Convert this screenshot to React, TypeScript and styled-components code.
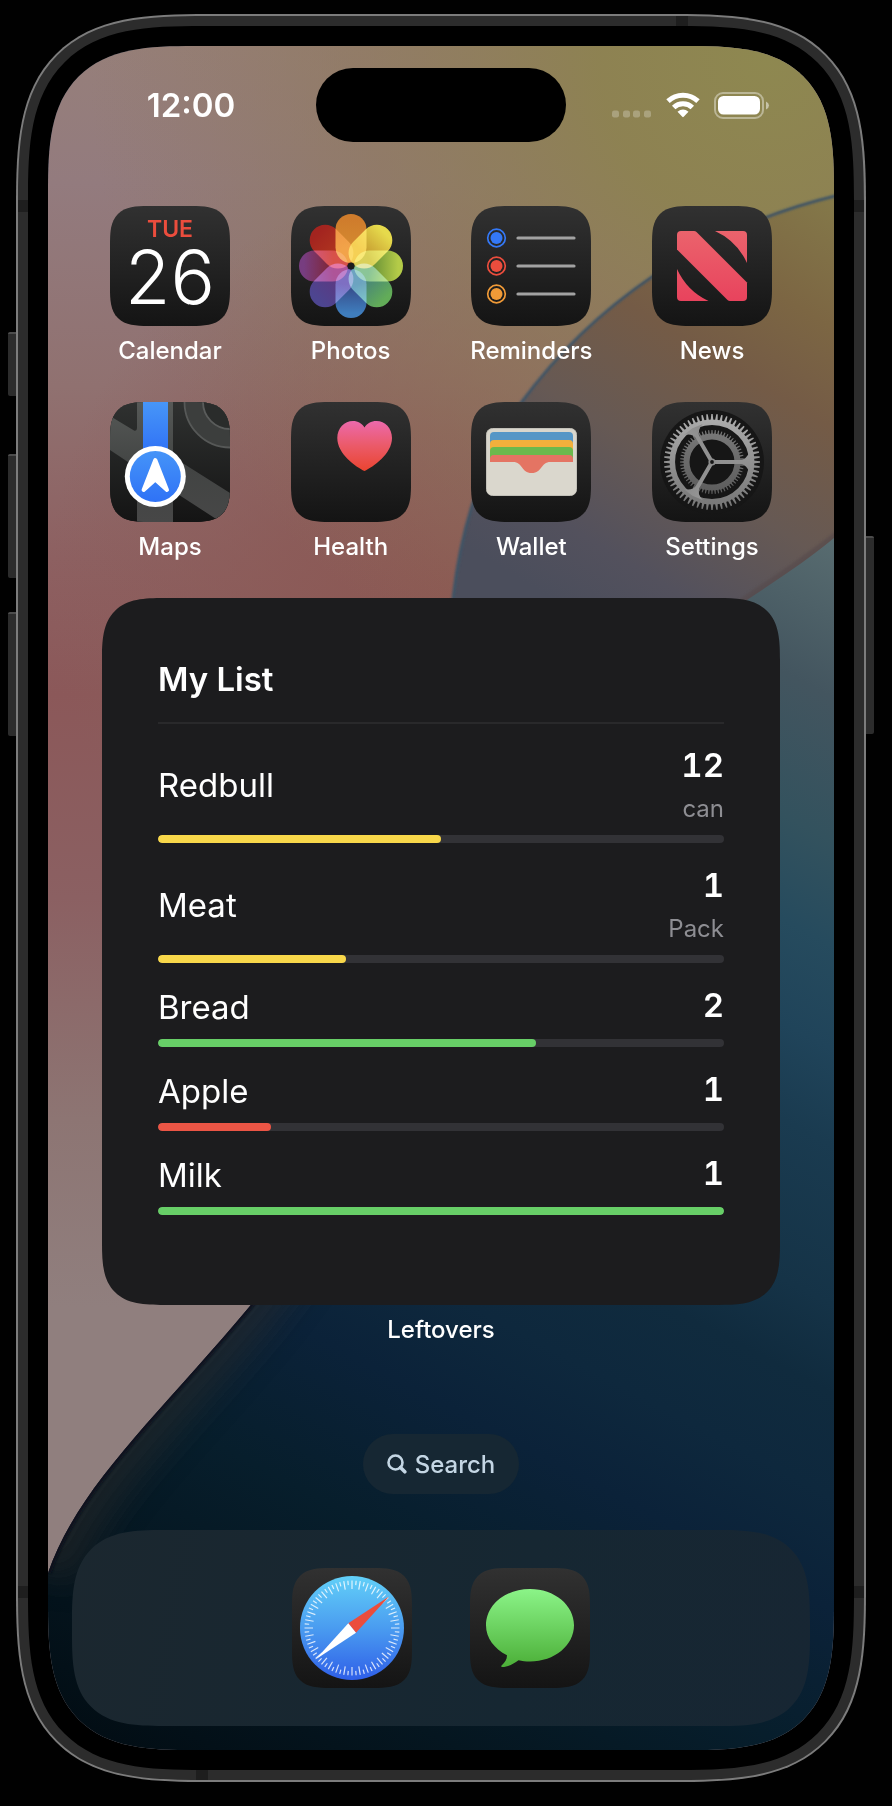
import React from "react";
import styled, { createGlobalStyle, css } from "styled-components";

const GlobalStyle = createGlobalStyle`
  *, *::before, *::after { box-sizing: border-box; }
  body {
    margin: 0;
    background: #010101;
    font-family: Inter, "Liberation Sans", sans-serif;
    color: #fff;
  }
  button { font: inherit; color: inherit; border: 0; padding: 0; background: none; cursor: pointer; }
`;

/* Continuous-curvature corner, with a plain round corner as the fallback. */
const squircle = (radius: number) => css`
  border-radius: ${radius}px;
  @supports (corner-shape: superellipse(1.57)) {
    border-radius: ${Math.round(radius * 1.4)}px;
    corner-shape: superellipse(1.57);
  }
`;

/* ---------- Device ---------- */

const Page = styled.main`
  padding: 14px 26px 24px 16px;
`;

const Frame = styled.div`
  position: relative;
  max-width: 1000px;
  margin: 0 auto;
  padding: 2px;
  background: #7c7c7c;
  ${squircle(137)}
`;

const Band = styled.div`
  padding: 10px;
  background: #2c2c2c;
  position: relative;
  overflow: hidden;
  ${squircle(135)}
`;

const Bezel = styled.div`
  position: relative;
  padding: 20px;
  background: #000;
  ${squircle(125)}
`;

const Screen = styled.div`
  position: relative;
  isolation: isolate;
  overflow: hidden;
  display: flex;
  flex-direction: column;
  padding-bottom: 24px;
  background: #0b2138;
  ${squircle(105)}
`;

const SideButton = styled.span<{ $side: "left" | "right"; $top: number; $height: number }>`
  position: absolute;
  ${(p) => p.$side}: -8px;
  top: ${(p) => p.$top}px;
  width: 8px;
  height: ${(p) => p.$height}px;
  background: #2c2c2c;
  border-top: 2px solid #4c4c4c;
  border-radius: ${(p) => (p.$side === "left" ? "2px 0 0 2px" : "0 2px 2px 0")};
`;

const Antenna = styled.span<{ $at: "tl" | "tr" | "bl" | "br" | "top" | "bottom" }>`
  position: absolute;
  background: #1e1e1e;
  ${(p) =>
    ({
      tl: "left: 0; top: 184px; width: 10px; height: 12px;",
      tr: "right: 0; top: 184px; width: 10px; height: 12px;",
      bl: "left: 0; bottom: 182px; width: 10px; height: 12px;",
      br: "right: 0; bottom: 182px; width: 10px; height: 12px;",
      top: "right: 176px; top: 0; width: 12px; height: 10px;",
      bottom: "left: 178px; bottom: 0; width: 12px; height: 10px;",
    })[p.$at]}
`;

const WallpaperSvg = styled.svg`
  position: absolute;
  inset: 0;
  width: 100%;
  height: 100%;
  z-index: -1;
`;

const TEAL =
  "M699 554 C735 530 765 510 786 492 L786 1704 L0 1704 L0 1527 C30 1440 110 1370 202 1260 L300 1130 Z";

function Wallpaper() {
  return (
    <WallpaperSvg viewBox="0 0 786 1704" preserveAspectRatio="none" aria-hidden="true">
      <defs>
        <linearGradient id="wp-base" x1="0" y1="0" x2="0" y2="1">
          <stop offset="0" stopColor="#967f7a" />
          <stop offset=".08" stopColor="#937b7e" />
          <stop offset=".2" stopColor="#907170" />
          <stop offset=".3" stopColor="#8d6061" />
          <stop offset=".38" stopColor="#8b5859" />
          <stop offset=".5" stopColor="#8b6062" />
          <stop offset=".63" stopColor="#8d7573" />
          <stop offset=".74" stopColor="#907f7e" />
          <stop offset="1" stopColor="#907f7e" />
        </linearGradient>
        <radialGradient id="wp-olive" gradientUnits="userSpaceOnUse" cx="720" cy="10" r="680">
          <stop offset="0" stopColor="#8e8850" />
          <stop offset=".25" stopColor="#8d8250" stopOpacity=".95" />
          <stop offset=".6" stopColor="#8f7a5a" stopOpacity=".6" />
          <stop offset="1" stopColor="#90785f" stopOpacity="0" />
        </radialGradient>
        <radialGradient id="wp-red" gradientUnits="userSpaceOnUse" cx="400" cy="540" r="400">
          <stop offset="0" stopColor="#8b5752" />
          <stop offset=".4" stopColor="#8b5a56" stopOpacity=".75" />
          <stop offset="1" stopColor="#8b5f5a" stopOpacity="0" />
        </radialGradient>
        <linearGradient id="wp-arc" gradientUnits="userSpaceOnUse" x1="760" y1="120" x2="500" y2="550">
          <stop offset="0" stopColor="#857b4a" />
          <stop offset=".25" stopColor="#7c6643" />
          <stop offset=".42" stopColor="#745b46" />
          <stop offset=".65" stopColor="#665954" />
          <stop offset=".86" stopColor="#53515d" />
          <stop offset="1" stopColor="#4b4e5c" />
        </linearGradient>
        <linearGradient id="wp-teal" gradientUnits="userSpaceOnUse" x1="786" y1="492" x2="124" y2="1742">
          <stop offset="0" stopColor="#586c70" />
          <stop offset=".1" stopColor="#43555f" />
          <stop offset=".19" stopColor="#33525e" />
          <stop offset=".255" stopColor="#264b5e" />
          <stop offset=".32" stopColor="#20445a" />
          <stop offset=".38" stopColor="#1a3b50" />
          <stop offset=".48" stopColor="#153347" />
          <stop offset=".535" stopColor="#102b3e" />
          <stop offset=".6" stopColor="#0e283d" />
          <stop offset=".67" stopColor="#0b2239" />
          <stop offset=".77" stopColor="#071e2c" />
          <stop offset=".88" stopColor="#051620" />
          <stop offset="1" stopColor="#020d14" />
        </linearGradient>
        <clipPath id="wp-teal-clip">
          <path d={TEAL} />
        </clipPath>
        <filter id="wp-soft" x="-20%" y="-20%" width="140%" height="140%">
          <feGaussianBlur stdDeviation="16" />
        </filter>
        <filter id="wp-edge" x="-5%" y="-5%" width="110%" height="110%">
          <feGaussianBlur stdDeviation="1" />
        </filter>
      </defs>
      <rect width="786" height="1704" fill="url(#wp-base)" />
      <rect width="786" height="1000" fill="url(#wp-red)" />
      <rect width="786" height="800" fill="url(#wp-olive)" />
      <path d="M786 150 C650 180 540 265 473 357 C430 420 412 490 405 552 L405 700 L786 700 Z" fill="url(#wp-arc)" />
      <path
        d="M800 147 C650 180 540 265 473 357 C430 420 412 490 405 552 L403 600"
        fill="none"
        stroke="#3f5466"
        strokeWidth="3"
        filter="url(#wp-edge)"
      />
      <path d="M690 560 C735 530 765 510 800 482" fill="none" stroke="#554a4c" strokeWidth="10" opacity=".6" filter="url(#wp-edge)" />
      <path d={TEAL} fill="url(#wp-teal)" />
      <g clipPath="url(#wp-teal-clip)">
        <path
          d="M0 1527 C30 1440 110 1370 202 1260 L300 1130"
          fill="none"
          stroke="#2c2c2b"
          strokeWidth="56"
          opacity=".55"
          filter="url(#wp-soft)"
        />
        <path
          d="M0 1527 C30 1440 110 1370 202 1260 L300 1130"
          fill="none"
          stroke="#08111b"
          strokeWidth="6"
          opacity=".85"
          filter="url(#wp-edge)"
        />
      </g>
    </WallpaperSvg>
  );
}

/* ---------- Status bar ---------- */

const StatusBar = styled.header`
  display: grid;
  grid-template-columns: 1fr 250px 1fr;
  align-items: center;
  height: 74px;
  margin: 22px 0 64px;
`;

const Clock = styled.time`
  justify-self: center;
  padding-left: 18px;
  font-size: 33px;
  font-weight: 600;
  line-height: 40px;
`;

const Island = styled.div`
  height: 74px;
  border-radius: 37px;
  background: #000;
`;

const StatusIcons = styled.div`
  justify-self: end;
  display: flex;
  align-items: center;
  gap: 14px;
  padding-right: 64px;
  svg { display: block; }
`;

/* ---------- Apps ---------- */

const AppGrid = styled.nav`
  display: grid;
  grid-template-columns: repeat(4, 120px);
  justify-content: space-between;
  row-gap: 37px;
  padding: 0 62px;
`;

const AppButton = styled.button`
  display: flex;
  flex-direction: column;
  align-items: center;
  gap: 10px;
`;

const Label = styled.span`
  font-size: 24px;
  font-weight: 500;
  line-height: 29px;
  white-space: nowrap;
`;

const Tile = styled.span`
  display: block;
  width: 120px;
  height: 120px;
  overflow: hidden;
  background: linear-gradient(#313131, #141414);
  ${squircle(27)}
  > svg { display: block; width: 120px; height: 120px; }
`;

const CalendarFace = styled.span`
  display: flex;
  flex-direction: column;
  align-items: center;
  padding-top: 11px;
`;

const Weekday = styled.span`
  font-size: 23px;
  font-weight: 600;
  line-height: 24px;
  color: #eb4d3d;
`;

const DayNumber = styled.span`
  font-size: 74px;
  font-weight: 300;
  line-height: 72px;
`;

function CalendarIcon() {
  return (
    <CalendarFace>
      <Weekday>TUE</Weekday>
      <DayNumber>26</DayNumber>
    </CalendarFace>
  );
}

const petals: [string, string][] = [
  ["#cf7c2c", "#d48a30"],
  ["#e6da4c", "#c4982e"],
  ["#b4cb48", "#5f8a34"],
  ["#62ac58", "#45807c"],
  ["#3f7dbd", "#354684"],
  ["#4d4590", "#5c3880"],
  ["#773d80", "#802430"],
  ["#a3241f", "#b0361f"],
];

function PhotosIcon() {
  return (
    <svg viewBox="0 0 120 120">
      <defs>
        {petals.map(([a, b], i) => (
          <linearGradient key={i} id={`petal-${i}`} x1="0" y1="0" x2="0" y2="1">
            <stop offset=".1" stopColor={a} />
            <stop offset=".7" stopColor={b} />
          </linearGradient>
        ))}
      </defs>
      <g style={{ isolation: "isolate" }}>
        {petals.map((_, i) => (
          <rect
            key={i}
            x="44.5"
            y="8"
            width="31"
            height="49"
            rx="15.5"
            fill={`url(#petal-${i})`}
            transform={`rotate(${i * 45} 60 60)`}
            style={{ mixBlendMode: "screen" }}
          />
        ))}
      </g>
      <circle cx="60" cy="60" r="3.5" fill="#1c1c1c" />
    </svg>
  );
}

function RemindersIcon() {
  return (
    <svg viewBox="0 0 120 120">
      {["#3478f6", "#eb4d3d", "#f09a37"].map((c, i) => (
        <g key={c} transform={`translate(0 ${32 + i * 28})`}>
          <circle cx="25.500" cy="0" r="8.8" fill="none" stroke={c} strokeWidth="1.7" />
          <circle cx="25.500" cy="0" r="6" fill={c} />
          <path d="M47 0H103" stroke="#a2a2a2" strokeWidth="3.200" strokeLinecap="round" />
        </g>
      ))}
    </svg>
  );
}

function NewsIcon() {
  return (
    <svg viewBox="0 0 120 120">
      <defs>
        <linearGradient id="news" gradientUnits="userSpaceOnUse" x1="0" y1="25" x2="0" y2="95">
          <stop offset="0" stopColor="#eb636c" />
          <stop offset="1" stopColor="#e8435d" />
        </linearGradient>
      </defs>
      <g fill="url(#news)">
        <path d="M29 25H42Q43.500 25 44.500 26L95 76.500V91Q95 95 91 95H78Q76.500 95 75.500 94L25 43.500V29Q25 25 29 25Z" />
        <path d="M63 25H91Q95 25 95 29V57Q85 35 63 25Z" />
        <path d="M25 63Q35 85 56.500 95H29Q25 95 25 91Z" />
      </g>
    </svg>
  );
}

function MapsIcon() {
  return (
    <svg viewBox="0 0 120 120">
      <defs>
        <linearGradient id="map-ground" x1="0" y1="0" x2="0" y2="1">
          <stop offset="0" stopColor="#2f3130" />
          <stop offset="1" stopColor="#141414" />
        </linearGradient>
        <linearGradient id="map-road" gradientUnits="userSpaceOnUse" x1="0" y1="0" x2="0" y2="120">
          <stop offset="0" stopColor="#565957" />
          <stop offset=".55" stopColor="#424443" />
          <stop offset="1" stopColor="#474747" />
        </linearGradient>
        <linearGradient id="map-blue" gradientUnits="userSpaceOnUse" x1="0" y1="0" x2="0" y2="60">
          <stop offset="0" stopColor="#4796f8" />
          <stop offset=".7" stopColor="#3478f6" />
          <stop offset="1" stopColor="#2c6bf0" />
        </linearGradient>
        <linearGradient id="map-pin" x1="0" y1="0" x2="0" y2="1">
          <stop offset="0" stopColor="#4594f8" />
          <stop offset="1" stopColor="#2f72f6" />
        </linearGradient>
      </defs>
      <rect width="120" height="120" fill="url(#map-ground)" />
      <circle cx="120" cy="0" r="45.500" fill="#3c3e3d" stroke="#565857" strokeWidth="1.800" />
      <circle cx="120" cy="0" r="27" fill="#2a2c2b" stroke="#5a5c5b" strokeWidth="1.800" />
      <path d="M0 14 24 28.500Q27 29.500 27 26V0H63V55L120 91V126L63 89V120H27V66L0 48Z" fill="url(#map-road)" />
      <rect x="33" y="0" width="25" height="60" fill="url(#map-blue)" />
      <circle cx="45.300" cy="74.500" r="30.500" fill="#fff" />
      <circle cx="45.300" cy="74.500" r="25.500" fill="url(#map-pin)" />
      <path d="M45.300 58 57 88 45.300 77.500 33.600 88Z" fill="#fff" stroke="#fff" strokeWidth="4" strokeLinejoin="round" />
    </svg>
  );
}

function HealthIcon() {
  return (
    <svg viewBox="0 0 120 120">
      <defs>
        <linearGradient id="heart" x1="0" y1="0" x2="0" y2="1">
          <stop offset="0" stopColor="#ec69ac" />
          <stop offset=".5" stopColor="#eb5a68" />
          <stop offset="1" stopColor="#ea4430" />
        </linearGradient>
      </defs>
      <path
        d="M73.500 69C65 65 46.300 52 46.300 36C46.300 26 53.500 19 62 19C67 19 71 21.500 73.500 25.500C76 21.500 80 19 85.500 19C94 19 101 26 101 36C101 52 82 65 73.500 69Z"
        fill="url(#heart)"
      />
    </svg>
  );
}

function WalletIcon() {
  return (
    <svg viewBox="0 0 120 120">
      <g transform="translate(1 0)">
        <rect x="14.500" y="26.500" width="90" height="67" rx="6" fill="#d9d6cc" stroke="#c2c0b8" strokeWidth="1" />
        <path d="M18 62V34a4 4 0 0 1 4-4H97a4 4 0 0 1 4 4V62Z" fill="#5596c6" />
        <path d="M18 62V42a4 4 0 0 1 4-4H97a4 4 0 0 1 4 4V62Z" fill="#f2b03c" />
        <path d="M18 62V49a4 4 0 0 1 4-4H97a4 4 0 0 1 4 4V62Z" fill="#6bb94d" />
        <path d="M18 76V57a4 4 0 0 1 4-4H97a4 4 0 0 1 4 4V76Z" fill="#e47463" />
        <path d="M15 60H41C51 60 49 71 59.700 71C70.500 71 68.500 60 78.500 60H104V88a5 5 0 0 1-5 5H20a5 5 0 0 1-5-5Z" fill="#dad7cd" />
      </g>
    </svg>
  );
}

const teeth = (count: number, inner: number, outer: number, base: number, tip: number) =>
  Array.from({ length: count }, (_, i) => {
    const a = (i * 2 * Math.PI) / count;
    const point = (r: number, w: number) => {
      const x = 60 + r * Math.cos(a) - w * Math.sin(a);
      const y = 60 + r * Math.sin(a) + w * Math.cos(a);
      return `${x.toFixed(2)} ${y.toFixed(2)}`;
    };
    return `M${point(inner, -base)}L${point(outer, -tip)}L${point(outer, tip)}L${point(inner, base)}Z`;
  }).join("");

function SettingsIcon() {
  return (
    <svg viewBox="0 0 120 120">
      <defs>
        <linearGradient id="gear" gradientUnits="userSpaceOnUse" x1="0" y1="12" x2="0" y2="108">
          <stop offset="0" stopColor="#adadad" />
          <stop offset="1" stopColor="#757575" />
        </linearGradient>
        <linearGradient id="gear-inner" gradientUnits="userSpaceOnUse" x1="0" y1="28" x2="0" y2="92">
          <stop offset="0" stopColor="#787878" />
          <stop offset="1" stopColor="#5c5c5c" />
        </linearGradient>
      </defs>
      <circle cx="60" cy="60" r="52" fill="#161616" />
      <path d={teeth(60, 27, 32, 0.9, 0.5)} fill="url(#gear-inner)" />
      <circle cx="60" cy="60" r="25.500" fill="none" stroke="url(#gear-inner)" strokeWidth="6" />
      <path d={teeth(60, 41, 48, 1.4, 0.7)} fill="url(#gear)" />
      <circle cx="60" cy="60" r="39.700" fill="none" stroke="url(#gear)" strokeWidth="5.500" />
      <g fill="url(#gear)">
        {[0, 120, 240].map((r) => (
          <path key={r} d="M60 58H88Q95 57.500 97.500 49L99 60L97.500 71Q95 62.500 88 62H60Z" transform={`rotate(${r} 60 60)`} />
        ))}
      </g>
      <circle cx="60" cy="60" r="3.600" fill="#8d8d8d" />
      <circle cx="60" cy="60" r="1.900" fill="#161616" />
    </svg>
  );
}

function SafariIcon() {
  return (
    <svg viewBox="0 0 120 120">
      <defs>
        <linearGradient id="safari" x1="0" y1="0" x2="0" y2="1">
          <stop offset="0" stopColor="#62d0f8" />
          <stop offset=".5" stopColor="#4a9cf0" />
          <stop offset="1" stopColor="#2f5fe8" />
        </linearGradient>
      </defs>
      <circle cx="60" cy="60" r="52" fill="url(#safari)" />
      <g stroke="#fff" strokeOpacity=".8" strokeWidth="1.200">
        {Array.from({ length: 72 }, (_, i) => (
          <path key={i} d={i % 2 ? "M60 12.500V17" : "M60 12.500V21"} transform={`rotate(${i * 5} 60 60)`} />
        ))}
      </g>
      <path d="M97 28.500 64 64.700 56.300 55.300Z" fill="#eb4d3d" />
      <path d="M23.500 91.500 56.300 55.300 64 64.700Z" fill="#fff" />
    </svg>
  );
}

function MessagesIcon() {
  return (
    <svg viewBox="0 0 120 120">
      <defs>
        <linearGradient id="messages" x1="0" y1="0" x2="0" y2="1">
          <stop offset="0" stopColor="#8bf488" />
          <stop offset="1" stopColor="#4caf38" />
        </linearGradient>
      </defs>
      <path
        d="M60 21C84.500 21 104 37 104 57.300C104 77.500 84.500 93.500 60 93.500C56 93.500 52 93 48.500 92.200C43.500 96 38 98.700 32 99C31 99 31 98 31.800 97.300C35 94.500 37 91.500 37 87.300C24.500 81 16 70 16 57.300C16 37 35.500 21 60 21Z"
        fill="url(#messages)"
      />
    </svg>
  );
}

const apps: { name: string; icon: React.ReactNode }[] = [
  { name: "Calendar", icon: <CalendarIcon /> },
  { name: "Photos", icon: <PhotosIcon /> },
  { name: "Reminders", icon: <RemindersIcon /> },
  { name: "News", icon: <NewsIcon /> },
  { name: "Maps", icon: <MapsIcon /> },
  { name: "Health", icon: <HealthIcon /> },
  { name: "Wallet", icon: <WalletIcon /> },
  { name: "Settings", icon: <SettingsIcon /> },
];

/* ---------- Widget ---------- */

const WidgetArea = styled.section`
  display: flex;
  flex-direction: column;
  gap: 10px;
  margin: 37px 54px 90px;
  text-align: center;
`;

const Widget = styled.div`
  padding: 56px 56px 90px;
  background: #1c1c1e;
  text-align: left;
  ${squircle(44)}
`;

const WidgetTitle = styled.h2`
  margin: 0 0 23px;
  padding-bottom: 18px;
  border-bottom: 2px solid #29292b;
  font-size: 33px;
  font-weight: 600;
  line-height: 50px;
`;

const ItemList = styled.ul`
  display: flex;
  flex-direction: column;
  gap: 24px;
  margin: 0;
  padding: 0;
  list-style: none;
`;

const Item = styled.li`
  display: flex;
  flex-direction: column;
  gap: 12px;
`;

const ItemRow = styled.div`
  display: flex;
  align-items: center;
  justify-content: space-between;
`;

const ItemName = styled.span`
  font-size: 33px;
  line-height: 40px;
`;

const Amount = styled.span`
  align-self: flex-start;
  display: flex;
  flex-direction: column;
  align-items: flex-end;
  gap: 12px;
`;

const Count = styled.span`
  font-size: 33px;
  font-weight: 600;
  line-height: 36px;
  font-variant-numeric: tabular-nums;
`;

const Unit = styled.span`
  font-size: 24px;
  line-height: 28px;
  color: #8e8e93;
`;

const Track = styled.div`
  height: 8px;
  overflow: hidden;
  border-radius: 4px;
  background: #323236;
`;

const Fill = styled.div<{ $color: string }>`
  height: 100%;
  border-radius: 4px;
  background: ${(p) => p.$color};
`;

const YELLOW = "#f8d74a";
const GREEN = "#67ce67";
const RED = "#eb5545";

const items = [
  { name: "Redbull", count: 12, unit: "can", percent: 50, color: YELLOW },
  { name: "Meat", count: 1, unit: "Pack", percent: 33.3, color: YELLOW },
  { name: "Bread", count: 2, percent: 66.7, color: GREEN },
  { name: "Apple", count: 1, percent: 20, color: RED },
  { name: "Milk", count: 1, percent: 100, color: GREEN },
];

/* ---------- Search and dock ---------- */

const SearchButton = styled.button`
  align-self: center;
  display: flex;
  align-items: center;
  gap: 8px;
  height: 60px;
  padding: 0 24px;
  border-radius: 30px;
  background: #162733;
  color: #c4d6e4;
  font-size: 24px;
  font-weight: 500;
  line-height: 29px;
`;

const Dock = styled.footer`
  display: flex;
  justify-content: center;
  gap: 58px;
  margin: 36px 24px 0;
  padding: 38px;
  background: linear-gradient(100deg, #1b272f, #162732 60%, #172633);
  ${squircle(66)}
`;

export default function App() {
  return (
    <Page>
      <GlobalStyle />
      <Frame>
        <SideButton $side="left" $top={318} $height={64} />
        <SideButton $side="left" $top={440} $height={124} />
        <SideButton $side="left" $top={598} $height={124} />
        <SideButton $side="right" $top={522} $height={198} />
        <Band>
          <Antenna $at="tl" />
          <Antenna $at="tr" />
          <Antenna $at="bl" />
          <Antenna $at="br" />
          <Antenna $at="top" />
          <Antenna $at="bottom" />
          <Bezel>
            <Screen>
              <Wallpaper />
              <StatusBar>
                <Clock>12:00</Clock>
                <Island />
                <StatusIcons>
                  <svg width="40" height="27" viewBox="0 0 40 27" fill="#fff" fillOpacity=".25" aria-label="No signal">
                    {[0, 11, 21, 32].map((x) => (
                      <rect key={x} x={x} y="18.500" width="7" height="7" rx="2.200" />
                    ))}
                  </svg>
                  <svg width="34" height="27" viewBox="0 0 34 27" aria-label="Wi-Fi">
                    <g fill="none" stroke="#fff" strokeWidth="5">
                      <path d="M2 9.200A22 22 0 0 1 32 9.200" />
                      <path d="M7.700 15.500A13.500 13.500 0 0 1 26.300 15.500" />
                    </g>
                    <path d="M11.500 19.800Q17 15.200 22.500 19.800L17.700 24.800Q17 25.500 16.300 24.800Z" fill="#fff" />
                  </svg>
                  <svg width="56" height="27" viewBox="0 0 56 27" aria-label="Battery full">
                    <rect x="1" y="1" width="48" height="25" rx="8" fill="none" stroke="#fff" strokeOpacity=".4" strokeWidth="2" />
                    <rect x="4" y="4" width="42" height="18.500" rx="5.500" fill="#fff" />
                    <path d="M52 9.500Q55 11 55 13.500T52 17.500Z" fill="#fff" fillOpacity=".5" />
                  </svg>
                </StatusIcons>
              </StatusBar>

              <AppGrid aria-label="Apps">
                {apps.map((app) => (
                  <AppButton key={app.name}>
                    <Tile>{app.icon}</Tile>
                    <Label>{app.name}</Label>
                  </AppButton>
                ))}
              </AppGrid>

              <WidgetArea>
                <Widget>
                  <WidgetTitle>My List</WidgetTitle>
                  <ItemList>
                    {items.map((item) => (
                      <Item key={item.name}>
                        <ItemRow>
                          <ItemName>{item.name}</ItemName>
                          <Amount>
                            <Count>{item.count}</Count>
                            {item.unit && <Unit>{item.unit}</Unit>}
                          </Amount>
                        </ItemRow>
                        <Track>
                          <Fill $color={item.color} style={{ width: `${item.percent}%` }} />
                        </Track>
                      </Item>
                    ))}
                  </ItemList>
                </Widget>
                <Label>Leftovers</Label>
              </WidgetArea>

              <SearchButton>
                <svg width="20" height="20" viewBox="0 0 20 20" fill="none" stroke="currentColor" aria-hidden="true">
                  <circle cx="8.500" cy="8.500" r="7" strokeWidth="2.600" />
                  <path d="M13.500 13.500 17.800 17.800" strokeWidth="3.600" strokeLinecap="round" />
                </svg>
                Search
              </SearchButton>

              <Dock>
                <AppButton aria-label="Safari">
                  <Tile><SafariIcon /></Tile>
                </AppButton>
                <AppButton aria-label="Messages">
                  <Tile><MessagesIcon /></Tile>
                </AppButton>
              </Dock>
            </Screen>
          </Bezel>
        </Band>
      </Frame>
    </Page>
  );
}
